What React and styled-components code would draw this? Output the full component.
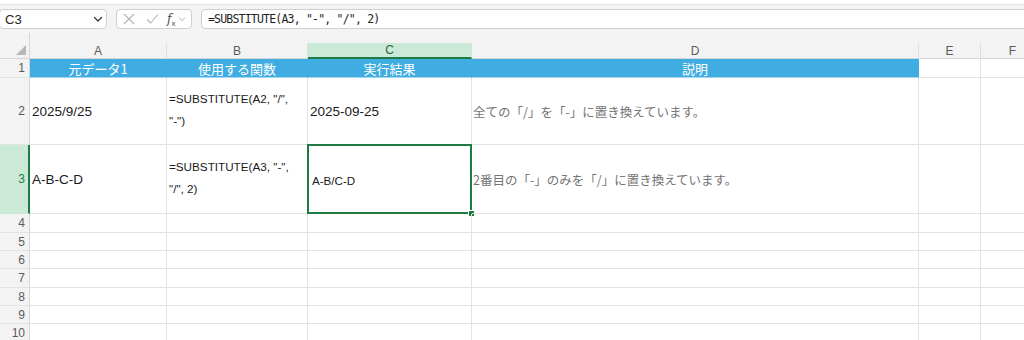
import React from "react";
import styled, { createGlobalStyle } from "styled-components";

const Global = createGlobalStyle`
  html, body { margin: 0; padding: 0; background: #fff; overflow: hidden; }
  body { font-family: "Liberation Sans", Arial, sans-serif; }
`;

const Page = styled.div`
  width: 1024px;
  height: 340px;
  overflow: hidden;
  background: #fff;
`;

const TopStrip = styled.div`
  height: 4px;
  background: #fff;
  border-bottom: 1px solid #e4e4e4;
`;

const FormulaBar = styled.div`
  height: 28px;
  background: #f4f4f4;
  display: flex;
  align-items: center;
  gap: 9px;
`;

const Box = styled.div`
  height: 18px;
  background: #fff;
  border: 1px solid #cfcfcf;
  border-radius: 4px;
  display: flex;
  align-items: center;
  box-sizing: content-box;
`;

const NameBox = styled(Box)`
  width: 101px;
  margin-left: -1px;
  padding: 0 0 0 5px;
  justify-content: space-between;
  font-size: 13px;
  color: #222;
`;

const FnBox = styled(Box)`
  width: 74px;
  padding: 0;
`;

const FormulaInput = styled(Box)`
  flex: 1;
  margin-right: -10px;
  padding-left: 6px;
  font-family: "DejaVu Sans Mono", "Liberation Mono", monospace;
  font-size: 11.5px;
  letter-spacing: -0.8px;
  color: #1f1f1f;
  white-space: pre;
`;

const FxText = styled.span`
  font-family: "DejaVu Serif", "Liberation Serif", serif;
  font-style: italic;
  font-size: 12px;
  color: #4a4a4a;
  display: inline-flex;
  align-items: flex-end;
  margin-left: 8px;
  sub {
    font-size: 8px;
    font-style: normal;
    font-family: "Liberation Sans", sans-serif;
    vertical-align: baseline;
    position: relative;
    top: 2px;
  }
`;

const IconSlot = styled.span`
  display: inline-flex;
  align-items: center;
  margin-left: ${(p) => p.$ml || 0}px;
  margin-right: ${(p) => p.$mr || 0}px;
`;

const Sheet = styled.div`
  display: grid;
  grid-template-columns: 30px 137px 141px 164px 447px 62px 64px;
  grid-template-rows: 10px 16px 19px 67px 69px 19px 18px 18px 19px 18px 18px 19px;
`;

const Corner = styled.div`
  grid-row: span 2;
  background: #f3f3f3;
  border-right: 1px solid #d6d6d6;
  border-bottom: 1px solid #d6d6d6;
  box-sizing: border-box;
  display: flex;
  align-items: flex-end;
  justify-content: flex-end;
  padding: 0 3px 3px 0;
`;

const HeadSpacer = styled.div`
  grid-column: 2 / -1;
  background: #f3f3f3;
`;

const ColHead = styled.div`
  background: ${(p) => (p.$active ? "#cae9d6" : "#f3f3f3")};
  border-right: 1px solid ${(p) => (p.$active ? "#cae9d6" : "#e0e0e0")};
  border-bottom: ${(p) => (p.$active ? "2px solid #1e7b45" : "1px solid #d6d6d6")};
  box-sizing: border-box;
  display: flex;
  align-items: center;
  justify-content: center;
  font-size: 12px;
  color: ${(p) => (p.$active ? "#1e6b3e" : "#5a5a5a")};
`;

const RowHead = styled.div`
  background: ${(p) => (p.$active ? "#cae9d6" : "#f3f3f3")};
  border-right: ${(p) => (p.$active ? "2px solid #1e7b45" : "1px solid #d6d6d6")};
  border-bottom: 1px solid ${(p) => (p.$active ? "#cae9d6" : "#e3e3e3")};
  box-sizing: border-box;
  display: flex;
  align-items: center;
  justify-content: flex-end;
  padding-right: ${(p) => (p.$active ? 3 : 4)}px;
  font-size: 12px;
  color: ${(p) => (p.$active ? "#1e7b45" : "#5a5a5a")};
`;

const Cell = styled.div`
  position: relative;
  box-sizing: border-box;
  border-right: 1px solid #e2e2e2;
  border-bottom: 1px solid #e2e2e2;
  display: flex;
  align-items: center;
  padding: 0 2px;
  font-size: 13.5px;
  color: #1a1a1a;
  white-space: nowrap;
`;

const TitleCell = styled(Cell)`
  background: #3fade2;
  border-right-color: #3fade2;
  border-bottom-color: #a8d6ef;
  justify-content: center;
  color: #fff;
  font-family: "Noto Sans CJK JP", sans-serif;
  font-size: 13px;
`;

const FormulaCell = styled(Cell)`
  font-size: 11.7px;
  line-height: 22px;
  white-space: pre-line;
  padding-bottom: 3px;
`;

const SmallCell = styled(Cell)`
  font-size: 11.6px;
  padding-left: 4px;
  padding-top: 3px;
`;

const NoteCell = styled(Cell)`
  font-family: "Noto Sans CJK JP", sans-serif;
  font-size: 12.5px;
  color: #747474;
  padding-left: 1px;
`;

const Selection = styled.div`
  position: absolute;
  left: -1px;
  top: -1px;
  right: -1px;
  bottom: -1px;
  border: 2px solid #1f7a44;
  pointer-events: none;
`;

const FillHandle = styled.div`
  position: absolute;
  right: -4px;
  bottom: -4px;
  width: 5px;
  height: 5px;
  background: #1f7a44;
  border: 1px solid #fff;
`;

const Chevron = ({ color = "#333", size = 10 }) => (
  <svg width={size} height={size} viewBox="0 0 10 10">
    <path d="M1.5 3.5 L5 7 L8.5 3.5" fill="none" stroke={color} strokeWidth="1.2" strokeLinecap="round" strokeLinejoin="round" />
  </svg>
);

const CrossIcon = () => (
  <svg width="12" height="12" viewBox="0 0 12 12">
    <path d="M1 1 L11 11 M11 1 L1 11" stroke="#b3b3b3" strokeWidth="1.1" fill="none" />
  </svg>
);

const CheckIcon = () => (
  <svg width="13" height="12" viewBox="0 0 13 12">
    <path d="M1 6.5 L4.5 10 L12 1.5" stroke="#b3b3b3" strokeWidth="1.1" fill="none" />
  </svg>
);

const CornerTriangle = () => (
  <svg width="10" height="10" viewBox="0 0 10 10">
    <path d="M10 0 L10 10 L0 10 Z" fill="#b9b9b9" />
  </svg>
);

const cols = ["A", "B", "C", "D", "E", "F"];

export default function App() {
  return (
    <Page>
      <Global />
      <TopStrip />
      <FormulaBar>
        <NameBox>
          <span>C3</span>
          <IconSlot $mr={3}>
            <Chevron />
          </IconSlot>
        </NameBox>
        <FnBox>
          <IconSlot $ml={6}><CrossIcon /></IconSlot>
          <IconSlot $ml={11}><CheckIcon /></IconSlot>
          <FxText>f<sub>x</sub></FxText>
          <IconSlot $ml={3}><Chevron color="#b0b0b0" size={8} /></IconSlot>
        </FnBox>
        <FormulaInput>{'=SUBSTITUTE(A3, "-", "/", 2)'}</FormulaInput>
      </FormulaBar>
      <Sheet>
        <Corner><CornerTriangle /></Corner>
        <HeadSpacer />
        {cols.map((c) => (
          <ColHead key={c} $active={c === "C"}>{c}</ColHead>
        ))}

        <RowHead>1</RowHead>
        <TitleCell>元データ1</TitleCell>
        <TitleCell>使用する関数</TitleCell>
        <TitleCell>実行結果</TitleCell>
        <TitleCell>説明</TitleCell>
        <Cell />
        <Cell />

        <RowHead>2</RowHead>
        <Cell>2025/9/25</Cell>
        <FormulaCell>{'=SUBSTITUTE(A2, "/",\n"-")'}</FormulaCell>
        <Cell>2025-09-25</Cell>
        <NoteCell>全ての「/」を「-」に置き換えています。</NoteCell>
        <Cell />
        <Cell />

        <RowHead $active>3</RowHead>
        <Cell>A-B-C-D</Cell>
        <FormulaCell>{'=SUBSTITUTE(A3, "-",\n"/", 2)'}</FormulaCell>
        <SmallCell>
          A-B/C-D
          <Selection />
          <FillHandle />
        </SmallCell>
        <NoteCell>2番目の「-」のみを「/」に置き換えています。</NoteCell>
        <Cell />
        <Cell />

        {[4, 5, 6, 7, 8, 9, 10].map((r) => (
          <React.Fragment key={r}>
            <RowHead>{r}</RowHead>
            {cols.map((c) => (
              <Cell key={c} />
            ))}
          </React.Fragment>
        ))}
      </Sheet>
    </Page>
  );
}
